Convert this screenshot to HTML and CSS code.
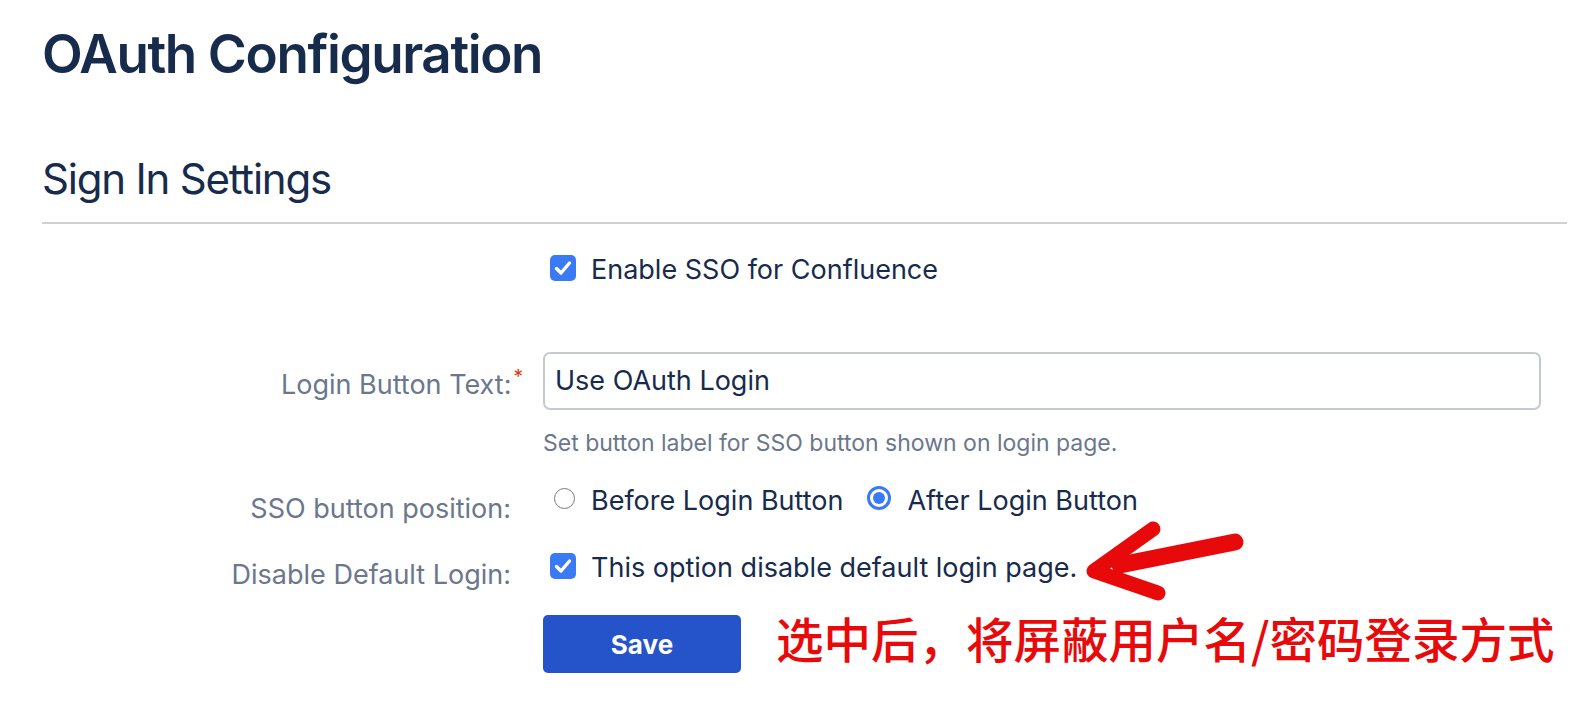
FILE: index.html
```html
<!DOCTYPE html>
<html lang="en">
<head>
<meta charset="utf-8">
<title>OAuth Configuration</title>
<link rel="stylesheet" href="styles.css">
</head>
<body>
<div class="page">
  <h1 class="title">OAuth Configuration</h1>
  <h2 class="section">Sign In Settings</h2>
  <form class="form">
    <div class="row row-enable">
      <div class="label"></div>
      <div class="field">
        <label class="check">
          <span class="cb"><svg viewBox="0 0 26 26" width="26" height="26"><path d="M6.5 13.5 L11 18 L19.5 8" fill="none" stroke="#fff" stroke-width="3.4" stroke-linecap="round" stroke-linejoin="round"/></svg></span>
          <span class="check-text">Enable SSO for Confluence</span>
        </label>
      </div>
    </div>

    <div class="row row-input">
      <div class="label label-input">Login Button Text:<span class="req">*</span></div>
      <div class="field">
        <div class="input">Use OAuth Login</div>
        <div class="help">Set button label for SSO button shown on login page.</div>
      </div>
    </div>

    <div class="row row-radio">
      <div class="label label-radio">SSO button position:</div>
      <div class="field radios">
        <label class="radio-opt"><span class="radio"></span><span class="check-text">Before Login Button</span></label>
        <label class="radio-opt"><span class="radio radio-on"><span class="dot"></span></span><span class="check-text">After Login Button</span></label>
      </div>
    </div>

    <div class="row row-disable">
      <div class="label label-disable">Disable Default Login:</div>
      <div class="field">
        <label class="check">
          <span class="cb"><svg viewBox="0 0 26 26" width="26" height="26"><path d="M6.5 13.5 L11 18 L19.5 8" fill="none" stroke="#fff" stroke-width="3.4" stroke-linecap="round" stroke-linejoin="round"/></svg></span>
          <span class="check-text">This option disable default login page.</span>
        </label>
      </div>
    </div>

    <div class="row row-save">
      <div class="label"></div>
      <div class="field save-line">
        <button type="button" class="btn-save">Save</button>
        <span class="note">选中后，将屏蔽用户名/密码登录方式</span>
      </div>
    </div>
  </form>

  <svg class="arrow" viewBox="0 0 180 90" width="180" height="90">
    <path d="M40 50 L155 27" fill="none" stroke="#e8090b" stroke-width="17" stroke-linecap="round"/>
    <path d="M73 14 L14 56 L78 78" fill="none" stroke="#e8090b" stroke-width="15" stroke-linecap="round" stroke-linejoin="round"/>
  </svg>
</div>
</body>
</html>
```

FILE: styles.css
```css
* { box-sizing: border-box; }

html, body {
  margin: 0;
  padding: 0;
  background: #ffffff;
}

body {
  font-family: Inter, "Noto Sans", "Liberation Sans", sans-serif;
  color: #172b4d;
}

.page {
  position: relative;
  padding: 21px 21px 0 42px;
}

.title {
  margin: 0;
  font-size: 53px;
  line-height: 66px;
  font-weight: 600;
  letter-spacing: -1.4px;
  color: #172b4d;
}

.section {
  margin: 66px 0 0 0;
  padding-bottom: 17px;
  font-size: 42px;
  line-height: 52px;
  font-weight: 400;
  letter-spacing: -1.2px;
  color: #172b4d;
  border-bottom: 2px solid #cfd0d2;
}

.form {
  display: flex;
  flex-direction: column;
}

.row {
  display: grid;
  grid-template-columns: 469px 998px;
  column-gap: 32px;
  align-items: start;
}

.label {
  text-align: right;
  font-size: 27px;
  line-height: 36px;
  color: #6b778c;
  white-space: nowrap;
}

.req {
  color: #de350b;
  font-size: 19px;
  vertical-align: top;
  line-height: 20px;
  margin-left: 2px;
  margin-right: -12px;
}

.row-enable { margin-top: 28px; }
.row-input { margin-top: 64px; }
.row-radio { margin-top: 25px; }
.row-disable { margin-top: 23px; }
.row-save { margin-top: 22px; }

.label-input { padding-top: 15px; }
.label-radio { padding-top: 8px; }
.label-disable { padding-top: 7px; }

.check {
  display: flex;
  align-items: flex-start;
  gap: 15px;
  font-size: 27px;
  line-height: 36px;
  color: #172b4d;
}

.cb {
  flex: none;
  width: 26px;
  height: 26px;
  margin-top: 3px;
  margin-left: 7px;
  border-radius: 5px;
  background: #3a7af5;
  display: flex;
}

.input {
  width: 998px;
  height: 58px;
  border: 2px solid #c5cad2;
  border-radius: 7px;
  padding: 0 10px;
  font-size: 27px;
  line-height: 54px;
  color: #172b4d;
}

.help {
  margin-top: 18px;
  font-size: 23px;
  line-height: 30px;
  color: #6b778c;
}

.radios {
  display: flex;
  gap: 24px;
}

.radio-opt {
  display: flex;
  align-items: flex-start;
  gap: 16px;
  font-size: 27px;
  line-height: 36px;
  color: #172b4d;
}

.radio {
  flex: none;
  width: 21px;
  height: 21px;
  margin-top: 5px;
  margin-left: 11px;
  border: 1.5px solid #7a7a7a;
  border-radius: 50%;
  background: #fff;
}

.radio-on {
  width: 24px;
  height: 24px;
  margin-top: 3px;
  margin-left: 0;
  border: 3px solid #3a7af5;
  display: flex;
  align-items: center;
  justify-content: center;
}

.dot {
  width: 12px;
  height: 12px;
  border-radius: 50%;
  background: #3a7af5;
}

.save-line {
  display: flex;
  align-items: flex-start;
  gap: 35px;
}

.btn-save {
  flex: none;
  width: 198px;
  height: 58px;
  border: none;
  border-radius: 5px;
  background: #2553c9;
  color: #ffffff;
  font-family: Inter, "Liberation Sans", sans-serif;
  font-size: 26px;
  font-weight: 700;
  padding: 0;
}

.note {
  font-family: "Noto Sans CJK SC", "Noto Sans", sans-serif;
  font-size: 47.5px;
  line-height: 58px;
  font-weight: 500;
  color: #e8090b;
  white-space: nowrap;
  margin-top: -6px;
}

.arrow {
  position: absolute;
  left: 1080px;
  top: 515px;
}
```
